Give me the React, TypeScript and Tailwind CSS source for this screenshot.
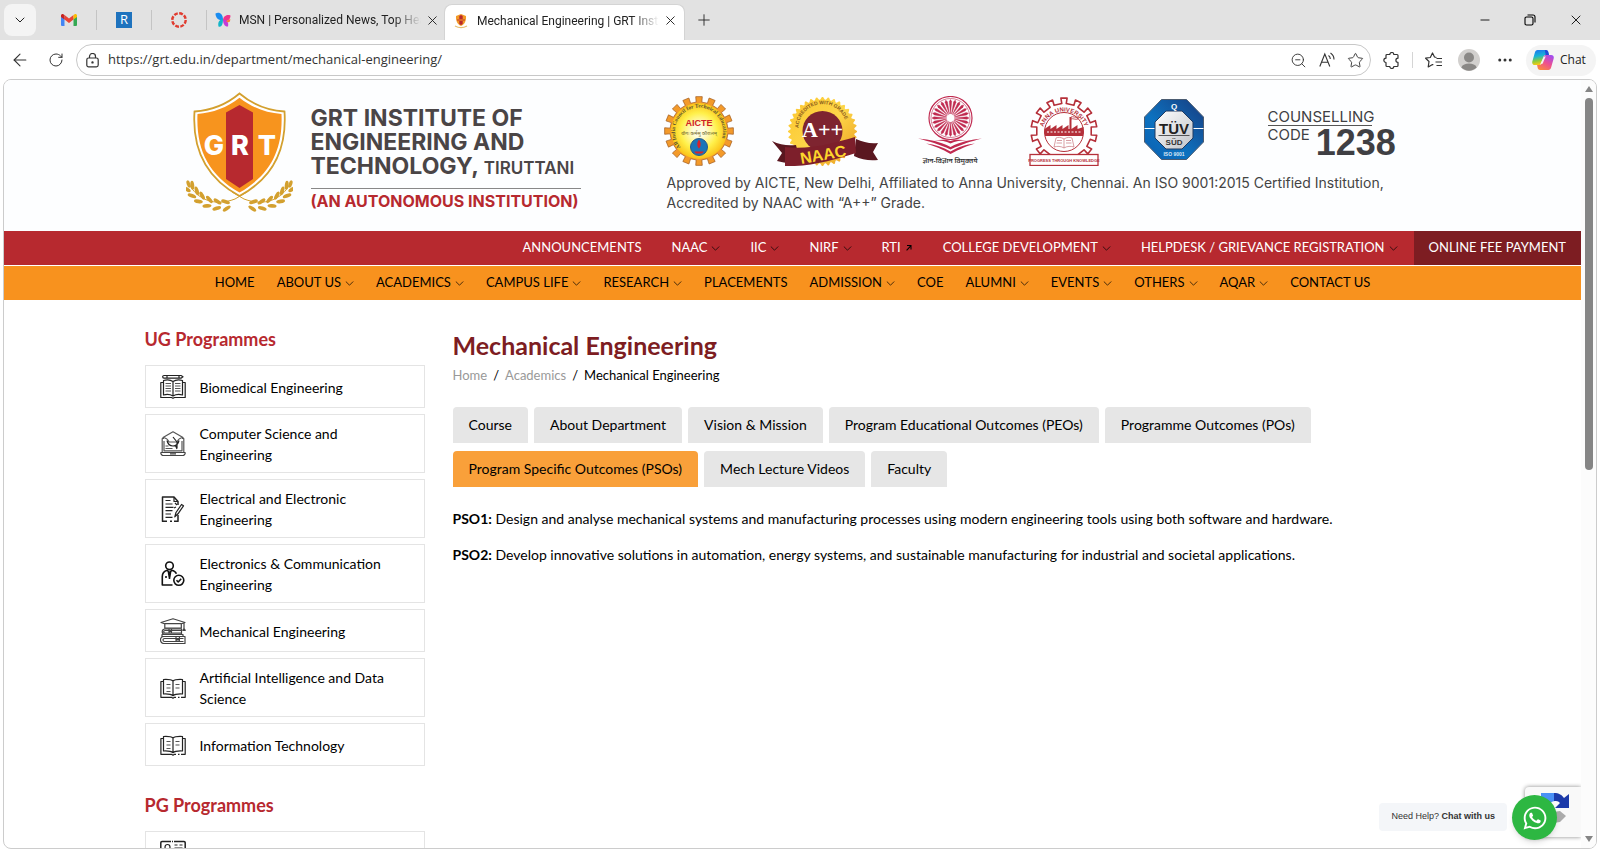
import { useState, type ReactNode } from 'react';
import {
	ArrowLeft,
	ChevronDown,
	Copy,
	Lock,
	Minus,
	MoreHorizontal,
	Plus,
	RotateCw,
	Star,
	X,
	ZoomOut,
} from 'lucide-react';
import { FaWhatsapp } from 'react-icons/fa';

interface NavItem {
	label: string;
	mark?: 'menu' | 'external';
}

interface Programme {
	name: string;
	icon: ReactNode;
}

const topNav: NavItem[] = [
	{ label: 'ANNOUNCEMENTS' },
	{ label: 'NAAC', mark: 'menu' },
	{ label: 'IIC', mark: 'menu' },
	{ label: 'NIRF', mark: 'menu' },
	{ label: 'RTI', mark: 'external' },
	{ label: 'COLLEGE DEVELOPMENT', mark: 'menu' },
	{ label: 'HELPDESK / GRIEVANCE REGISTRATION', mark: 'menu' },
];

const mainNav: NavItem[] = [
	{ label: 'HOME' },
	{ label: 'ABOUT US', mark: 'menu' },
	{ label: 'ACADEMICS', mark: 'menu' },
	{ label: 'CAMPUS LIFE', mark: 'menu' },
	{ label: 'RESEARCH', mark: 'menu' },
	{ label: 'PLACEMENTS' },
	{ label: 'ADMISSION', mark: 'menu' },
	{ label: 'COE' },
	{ label: 'ALUMNI', mark: 'menu' },
	{ label: 'EVENTS', mark: 'menu' },
	{ label: 'OTHERS', mark: 'menu' },
	{ label: 'AQAR', mark: 'menu' },
	{ label: 'CONTACT US' },
];

const tabs = [
	'Course',
	'About Department',
	'Vision & Mission',
	'Program Educational Outcomes (PEOs)',
	'Programme Outcomes (POs)',
	'Program Specific Outcomes (PSOs)',
	'Mech Lecture Videos',
	'Faculty',
];

const outcomes = [
	{
		code: 'PSO1:',
		text: 'Design and analyse mechanical systems and manufacturing processes using modern engineering tools using both software and hardware.',
	},
	{
		code: 'PSO2:',
		text: 'Develop innovative solutions in automation, energy systems, and sustainable manufacturing for industrial and societal applications.',
	},
];

// Outline of a gear or star: alternates between two radii
const gearPath = (
	cx: number,
	cy: number,
	outer: number,
	inner: number,
	teeth: number,
	top: number,
	base: number
) => {
	const points: string[] = [];
	for (let i = 0; i < teeth; i++) {
		const mid = (i / teeth) * Math.PI * 2 - Math.PI / 2;
		const step = Math.PI / teeth;
		[
			[inner, -base],
			[outer, -top],
			[outer, top],
			[inner, base],
		].forEach(([r, f]) => {
			const a = mid + f * step;
			points.push(
				`${(cx + r * Math.cos(a)).toFixed(2)} ${(cy + r * Math.sin(a)).toFixed(2)}`
			);
		});
	}
	return `M${points.join('L')}Z`;
};

const LineIcon = ({ children }: { children: ReactNode }) => (
	<svg
		viewBox="0 0 26 26"
		className="w-[26px] h-[26px] shrink-0"
		fill="none"
		stroke="#222"
		strokeWidth="1.2"
		strokeLinejoin="round"
		aria-hidden="true"
	>
		{children}
	</svg>
);

const BookPencilIcon = () => (
	<LineIcon>
		<path d="M4 1.5h17l2 1.3-2 1.4H4a1.3 1.3 0 0 1 0-2.7zM7 1.5v2.7M19 1.5v2.7" />
		<path d="M13 7.5C10.500 5.800 6 5.800 3.500 6.500V21C6 20.300 10.500 20.500 13 22c2.500-1.500 7-1.700 9.500-1V6.500C20 5.800 15.500 5.800 13 7.500zM13 7.500V22" />
		<path d="M3.500 8.500H.8v15H11.500l1.500.8 1.500-.8h10.700v-15h-2.700" />
		<path
			d="M5.500 9.500h5.500M5.500 12h5.500M5.500 14.500h5.500M5.500 17h5.500M15 9.500h5.500M15 12h5.500M15 14.500h5.500M15 17h5.500"
			stroke="#555"
		/>
	</LineIcon>
);

const LaptopCapIcon = () => (
	<LineIcon>
		<path d="M4 7.500H2.200V21.500H23.800V7.500H22M4 10v9.800h18V10" stroke="#555" />
		<path d="M.9 21.500h24.200v1.300l-1.500 1.700H2.400L.9 22.800zM10 22.800h6" stroke="#444" />
		<path d="M13 .8 3 6.500c3 .4 5 2 6 4.500h8c1-2.500 3-4.100 6-4.500z" stroke="#555" />
		<path d="M7 9.500c1 4.500 3.500 5.500 6 5.500s5-1 6-5.500M13 6l4 5v6M15.500 14.500 17 18" />
		<path d="M5.500 15h3M5.500 17.500h7" stroke="#555" />
	</LineIcon>
);

const PaperPenIcon = () => (
	<LineIcon>
		<path d="M18 9V5.500L14 1H2.500v24.300H7M10 25.300h2M14 25.300h4V19" strokeWidth="1.500" />
		<path d="M14 1v4.500h4" />
		<path d="M5.500 4.500h5M5.500 8h7M5.500 11.300h8M5.500 14.600h7M5.500 18h5.500M5.500 21.300h7" />
		<path d="m14.800 20.800 1.200-4.300 5.500-8 2 1.300-5.500 8zM15 7l2 2M14 12l2-1" />
	</LineIcon>
);

const PersonCheckIcon = () => (
	<LineIcon>
		<g strokeWidth="1.600" stroke="#111">
			<circle cx="9.500" cy="4.800" r="3.800" />
			<path d="M12.500 24H2.300V15.500c0-3.500 2-5.500 5-6.300L9.500 12l2.200-2.800c2.300.5 4 1.800 4.700 3.500M9.500 12v6M6 15v2" />
			<path d="m8.500 11.500 1 4.500 1-4.500z" fill="#111" />
			<circle cx="18.800" cy="19.300" r="5" />
			<path d="m16.500 19.300 1.700 1.700 3-3.200" />
		</g>
	</LineIcon>
);

const BooksCapIcon = () => (
	<LineIcon>
		<g stroke="#444">
			<path d="M13 .8 1 4.500l3.500 1.200h17L25 4.500zM4.800 5.700v4.500h16.500V5.700M24 5v5.500l1.300 1.800h-2.500L24 10.500" />
			<path d="M6 11h15.500v5.500H4.500a2.800 2.800 0 0 1 0-5.500zM21.500 12.500H5a1 1 0 0 0 0 2.700h16.500M9 11v3l1.300-1 1.200 1v-3" />
			<path d="M4 18.500h21v7H4a3.500 3.500 0 0 1 0-7zM23.500 20.500H4.500a1.400 1.400 0 0 0 0 3h19M16 18.500v4l1.700-1.300 1.700 1.300v-4" />
			<path d="M2 16.500h21v2H2z" />
		</g>
	</LineIcon>
);

const OpenBookIcon = () => (
	<LineIcon>
		<g stroke="#222">
			<path d="M13 6c-2-1.700-6-1.700-9.500-1.500v14.500c3.500-.2 7.500 0 9.500 1.700 2-1.700 6-1.900 9.500-1.700V4.500C19 4.300 15 4.300 13 6zM13 6v15" />
			<path d="M3.500 6.500H.9v15.800h10.600l1.500.9 1.500-.9H16M18 22.300h1.500M21 22.300h4.200V6.500h-2.700" />
			<path d="M6.500 9.500h4M6.500 13h4M6.500 16.500h4M15.500 9.500h4M15.500 13h4" stroke="#555" />
		</g>
	</LineIcon>
);

const CardIcon = () => (
	<LineIcon>
		<path d="M11 1.500H2A1.200 1.200 0 0 0 .8 2.700V24h24.400V2.700A1.200 1.200 0 0 0 24 1.500H14M12 1.500h1" strokeWidth="1.500" />
		<circle cx="7.500" cy="7" r="2.500" />
		<path d="M4 15c0-3 1.500-4.500 3.500-4.500S11 12 11 15zM14.500 5h3M19.500 5h3M14.500 8h8M14.500 11h8" />
	</LineIcon>
);

const ugProgrammes: Programme[] = [
	{ name: 'Biomedical Engineering', icon: <BookPencilIcon /> },
	{ name: 'Computer Science and Engineering', icon: <LaptopCapIcon /> },
	{ name: 'Electrical and Electronic Engineering', icon: <PaperPenIcon /> },
	{ name: 'Electronics & Communication Engineering', icon: <PersonCheckIcon /> },
	{ name: 'Mechanical Engineering', icon: <BooksCapIcon /> },
	{ name: 'Artificial Intelligence and Data Science', icon: <OpenBookIcon /> },
	{ name: 'Information Technology', icon: <OpenBookIcon /> },
];

const pgProgrammes: Programme[] = [{ name: '', icon: <CardIcon /> }];

const leaves = [
	[4, 96, 55],
	[9, 102, 45],
	[15, 107, 33],
	[23, 111, 20],
	[32, 113, 6],
	[41, 113, -10],
];

const Laurel = () => (
	<g fill="#d3a02f">
		{leaves.map(([x, y, angle]) => (
			<g key={x} transform={`rotate(${angle} ${x} ${y})`}>
				<ellipse cx={x - 1} cy={y - 3} rx="4.500" ry="1.900" transform={`rotate(28 ${x} ${y - 3})`} />
				<ellipse cx={x - 1} cy={y + 3} rx="4.500" ry="1.900" transform={`rotate(-24 ${x} ${y + 3})`} />
			</g>
		))}
		<ellipse cx="2.500" cy="92" rx="1.800" ry="3.800" transform="rotate(-18 2.500 92)" />
		<path d="M3 92c8 15 25 23 46 15l12-7" fill="none" stroke="#d3a02f" strokeWidth="1" />
	</g>
);

const ShieldLogo = () => (
	<svg viewBox="0 0 107 120" className="w-[107px] h-[120px] shrink-0" role="img" aria-label="GRT">
		<path
			d="M53.500 1.500C41 12 25 18.500 8.500 19.500 6 58 20 86 53.500 104 87 86 101 58 98.500 19.500 82 18.500 66 12 53.500 1.500z"
			fill="#fff"
			stroke="#d3a02f"
			strokeWidth="1.800"
		/>
		<path
			d="M53.500 5.800C41 15.500 27 21 11.500 22 10 57 22 82.500 53.500 100.500 85 82.500 97 57 95.500 22 80 21 66 15.500 53.500 5.800z"
			fill="#f7941e"
		/>
		<path d="M53.500 13 67 20.500V87L53.500 96 40 87V20.500z" fill="#b7292f" />
		<g
			fill="#fff"
			fontFamily="Inter, sans-serif"
			fontWeight="800"
			fontSize="27"
			textAnchor="middle"
		>
			<text x="28" y="63">G</text>
			<text x="54" y="63">R</text>
			<text x="81" y="63">T</text>
		</g>
		<Laurel />
		<g transform="translate(107 0) scale(-1 1)">
			<Laurel />
		</g>
	</svg>
);

const AicteBadge = () => (
	<svg viewBox="0 0 70 70" className="w-[70px] h-[70px] shrink-0" role="img" aria-label="AICTE">
		<defs>
			<radialGradient id="aicte-face">
				<stop offset="0.200" stopColor="#fffde0" />
				<stop offset="0.650" stopColor="#fff04a" />
				<stop offset="1" stopColor="#fbc318" />
			</radialGradient>
			<path id="aicte-ring" d="M18 52.500a24 24 0 1 1 34 0" />
		</defs>
		<path d={gearPath(35, 35, 34.5, 29, 16, 0.48, 0.5)} fill="#f39a2a" stroke="#a8652a" strokeWidth="0.800" />
		<circle cx="35" cy="35" r="28" fill="url(#aicte-face)" />
		<text fontFamily="Liberation Serif, serif" fontWeight="700" fontSize="5.500" fill="#5b5330">
			<textPath href="#aicte-ring" startOffset="2">
				All India Council for Technical Education
			</textPath>
		</text>
		<text x="35" y="30" textAnchor="middle" fontFamily="Liberation Sans, sans-serif" fontWeight="700" fontSize="9" fill="#cf2027">
			AICTE
		</text>
		<text x="35" y="39" textAnchor="middle" fontFamily="Noto Sans, sans-serif" fontSize="5" fill="#6a6225">
			योगः कर्मसु कौशलम्
		</text>
		<circle cx="35" cy="51" r="8.500" fill="#1b75b8" stroke="#28588c" />
		<path d="M35 43.500c2.500 3.500 2 7 0 9-2-2-2.500-5.500 0-9zM30 55.500h10l-2 2h-6z" fill="#d8232a" />
	</svg>
);

const NaacBadge = () => (
	<svg viewBox="0 0 110 70" className="w-[110px] h-[70px] shrink-0" role="img" aria-label="NAAC A++">
		<defs>
			<linearGradient id="naac-gold" x1="0" y1="0" x2="1" y2="1">
				<stop offset="0" stopColor="#fbc52d" />
				<stop offset="0.500" stopColor="#fdd649" />
				<stop offset="1" stopColor="#e9981c" />
			</linearGradient>
			<path id="naac-ring" d="M29 37a24 24 0 1 1 47 0" />
		</defs>
		<path d={gearPath(52.5, 35.5, 34.5, 32, 36, 0.2, 0.8)} fill="url(#naac-gold)" />
		<text fontFamily="Liberation Sans, sans-serif" fontWeight="700" fontSize="5" fill="#8a5a1c">
			<textPath href="#naac-ring" startOffset="5">
				ACCREDITED WITH GRADE
			</textPath>
		</text>
		<circle cx="52.500" cy="35" r="20" fill="#7e2430" />
		<path d="M2 45c8 4 16 5 24 4l4 17c-8 2-16 1-23-1l5-8z" fill="#5a1720" />
		<path d="M108 47c-8 1-15-1-22-4l-2 17c8 4 16 5 24 4l-5-8z" fill="#5a1720" />
		<path d="M15 51c25 3 49-4 70-10l1 16c-22 7-46 14-71 13z" fill="#7d1f2b" />
		<text x="52.500" y="41" textAnchor="middle" fontFamily="Liberation Serif, serif" fontWeight="700" fontSize="22" fill="#fff">
			A++
		</text>
		<text
			x="54"
			y="64"
			textAnchor="middle"
			transform="rotate(-10 54 64)"
			fontFamily="Liberation Sans, sans-serif"
			fontWeight="700"
			fontSize="16"
			fill="#fdd62c"
		>
			NAAC
		</text>
	</svg>
);

const UgcBadge = () => (
	<svg viewBox="0 0 68 70" className="w-[68px] h-[70px] shrink-0" role="img" aria-label="UGC">
		<g stroke="#c02a50" fill="none">
			<circle cx="34.500" cy="22" r="21.500" strokeWidth="1.200" />
			<circle cx="34.500" cy="22" r="19.500" strokeWidth="0.600" />
			{Array.from({ length: 24 }, (_, i) => (
				<path
					key={i}
					d="M34.500 18 33.300 5.500 34.500 3.500 35.700 5.500z"
					fill="#c02a50"
					strokeWidth="0.400"
					transform={`rotate(${i * 15} 34.500 22)`}
				/>
			))}
		</g>
		<g fill="#c02a50">
			<path d="M2 42.500c12 1 22 3 32.500 8.500 10-5.500 21-7.500 31.500-8.500-11 3-20 5.500-31.500 11C23 48 13 45.500 2 42.500z" />
			<path d="M10 47.500c9 1 17 3.500 24.500 8 7.500-4.500 15-7 24.500-8-8 2.500-15 5.500-24.500 10.500C26 53 18 50 10 47.500z" />
			<path d="M18 44c7 .5 12 1 16.500 3.500C39 45 45 44.500 51 44c-6 0-12-1-16.500 1C30 43 24 44 18 44z" />
		</g>
		<text x="34" y="67" textAnchor="middle" fontFamily="Noto Sans, sans-serif" fontWeight="600" fontSize="7" fill="#333">
			ज्ञान-विज्ञान विमुक्तये
		</text>
	</svg>
);

const AnnaBadge = () => (
	<svg viewBox="0 0 72 70" className="w-[72px] h-[70px] shrink-0" role="img" aria-label="Anna University">
		<defs>
			<path id="anna-ring" d="M14.500 37a21.500 21.500 0 1 1 43 0" />
		</defs>
		<path
			d={gearPath(36, 35, 33, 27.5, 14, 0.42, 0.36)}
			fill="#fff"
			stroke="#b5303a"
			strokeWidth="1.600"
			strokeLinejoin="round"
		/>
		<text fontFamily="Liberation Sans, sans-serif" fontWeight="700" fontSize="6" fill="#b5303a">
			<textPath href="#anna-ring" startOffset="6">
				ANNA UNIVERSITY
			</textPath>
		</text>
		<circle cx="36" cy="36" r="19.500" fill="#fff" stroke="#b5303a" strokeWidth="1" />
		<path d="M16.500 38v-5l6-4v4l6-4v4l6-4v4l6-4v4h1V21h2v12l6-4v4l6-2v7z" fill="#b5303a" />
		<path d="M43 21c2-1 4 1 7 0v2c-3 1-5-1-7 0" fill="none" stroke="#b5303a" strokeWidth="0.800" />
		<path d="M19 36h34" stroke="#fff" strokeWidth="1.200" strokeDasharray="2 1.500" />
		<path d="M17 39h38" stroke="#b5303a" strokeWidth="2" />
		<path
			d="M36 43c-3-2-6-2-8-1l-2 9c3-1 7-1 10 1 3-2 7-2 10-1l-2-9c-2-1-5-1-8 1zv9M29 44.500h5M28.500 47h5.500M38 44.500h5M38 47h5.500"
			fill="none"
			stroke="#c9767d"
			strokeWidth="0.700"
		/>
		<rect x="2" y="58.500" width="68" height="11" fill="#fff" stroke="#b5303a" strokeWidth="1.300" />
		<text x="36" y="65.500" textAnchor="middle" fontFamily="Liberation Sans, sans-serif" fontWeight="700" fontSize="4" fill="#b5303a">
			PROGRESS THROUGH KNOWLEDGE
		</text>
	</svg>
);

const TuvBadge = () => (
	<svg viewBox="0 0 60 70" className="w-[60px] h-[70px] shrink-0" role="img" aria-label="TÜV SÜD ISO 9001">
		<defs>
			<linearGradient id="tuv-blue" x1="0" y1="1" x2="1" y2="0">
				<stop offset="0" stopColor="#0a5fb0" />
				<stop offset="0.400" stopColor="#0d72c0" />
				<stop offset="1" stopColor="#173d80" />
			</linearGradient>
			<linearGradient id="tuv-silver" x1="0" y1="0" x2="1" y2="1">
				<stop offset="0" stopColor="#fff" />
				<stop offset="1" stopColor="#bfc3c8" />
			</linearGradient>
		</defs>
		<path d="M17.500 3.500h25L59.500 21v25L42.500 63.500h-25L.5 46V21z" fill="url(#tuv-blue)" stroke="#4b5c72" />
		<path d="M.5 32.500h59" stroke="#fff" strokeWidth="1" />
		<path d="M22 15h16l11 11v16L38 53H22L11 42V26z" fill="url(#tuv-silver)" stroke="#203a60" />
		<path d="M14.500 39.500h31" stroke="#333" strokeWidth="0.800" />
		<g fontFamily="Liberation Sans, sans-serif" fontWeight="700" textAnchor="middle">
			<text x="30" y="37.500" fontSize="15" fill="#222">TÜV</text>
			<text x="30" y="49" fontSize="8" fill="#333">SÜD</text>
			<text x="30" y="13" fontSize="8" fill="#fff">Q</text>
			<text x="30" y="60" fontSize="5" fill="#dbe8f5">ISO 9001</text>
		</g>
	</svg>
);

const MsnIcon = () => (
	<svg viewBox="0 0 16 16" className="w-4 h-4 shrink-0" aria-hidden="true">
		<path d="M.5 1.500C4-.500 8 1.500 8 8 4.500 9 .5 6.500.5 1.500z" fill="#1a8cf0" />
		<path d="M8 7C4.500 7.500 2.500 10 3.500 14.500c3 1 4.500-2 4.500-7.500z" fill="#12b5c9" />
		<path d="M15.500 3.500C11.500 2 8 4.500 8 8.500c4 1.500 7.500-.5 7.500-5z" fill="#f0348d" />
		<path d="M8 7.500c3.500 0 6 2.500 5 7-3 .5-5-2.500-5-7z" fill="#c43bd8" />
		<path d="M11 9.300 15.300 7c0 3-1.300 4.500-4.300 2.300z" fill="#ff7a2e" />
	</svg>
);

const GmailIcon = () => (
	<svg viewBox="0 0 16 12" className="w-4 h-3" aria-hidden="true">
		<path d="M0 1.800V11a1 1 0 0 0 1 1h2.500V4z" fill="#4285f4" />
		<path d="M16 1.800V11a1 1 0 0 1-1 1h-2.500V4z" fill="#34a853" />
		<path d="M3.500 5.500V1L8 4.500 12.500 1v4.500L8 9z" fill="#ea4335" />
		<path d="M0 1.600C0 .2 1.600-.4 2.600.4l.9.7v4.500L0 3z" fill="#c5221f" />
		<path d="M16 1.600C16 .2 14.400-.4 13.400.4l-.9.7v4.500L16 3z" fill="#fbbc04" />
	</svg>
);

const CopilotIcon = () => (
	<svg viewBox="0 0 24 22" className="w-[22px] h-5" aria-hidden="true">
		<defs>
			<linearGradient id="pilot-a" x1="0" y1="0" x2="0.200" y2="1">
				<stop offset="0" stopColor="#1e6ff0" />
				<stop offset="0.450" stopColor="#16b4d6" />
				<stop offset="0.750" stopColor="#8ccb3c" />
				<stop offset="1" stopColor="#f6c915" />
			</linearGradient>
			<linearGradient id="pilot-b" x1="0.800" y1="0" x2="0.200" y2="1">
				<stop offset="0" stopColor="#a14df0" />
				<stop offset="0.500" stopColor="#ee4f90" />
				<stop offset="1" stopColor="#fb8a3c" />
			</linearGradient>
		</defs>
		<path d="M6 0h9c2 0 2.600 1 3 3l.6 2.500H15c-1.500 0-2 .8-2.400 2L10 15c-.5 1-1 1.500-2.500 1.500H3C.5 16.500-.4 14.500.4 12L3 3C3.600 1 4.500 0 6 0z" fill="url(#pilot-a)" />
		<path d="M14 0h1c2 0 2.600 1 3 3l.6 2.500H15z" fill="#2147d8" />
		<path d="M18 22H9c-2 0-2.600-1-3-3l-.5-2.500h2.700c1.300 0 1.800-.5 2.300-2L13 7c.5-1.200 1-1.500 2.500-1.500H21c2.500 0 3.400 2 2.600 4.500L21 19c-.6 2-1.500 3-3 3z" fill="url(#pilot-b)" />
		<path d="M12.800 7.500 15 7l-3.500 8-2.500.3z" fill="#f4f4f4" />
	</svg>
);

const MiniShield = () => (
	<svg viewBox="0 0 16 16" className="w-4 h-4 shrink-0" aria-hidden="true">
		<path d="M8 1 13 3c.3 4.500-1 8-5 10C4 11 2.700 7.500 3 3z" fill="#f39a27" />
		<path d="M6.300 3 8 2l1.700 1v8L8 12l-1.700-1z" fill="#b7292f" />
		<path d="M4 6h8v2H4z" fill="#d9662a" />
		<path d="M2 13c3.500 2 8.500 2 12 0" fill="none" stroke="#e5bf71" strokeWidth="1.200" />
	</svg>
);

const BrowserTabs = () => (
	<div className="flex h-10 shrink-0 items-center bg-[#e2e2e2] pl-1 text-[#222]">
		<button aria-label="Tab actions" className="flex w-8 h-8 items-center justify-center rounded-lg bg-[#f4f4f4]">
			<ChevronDown size={16} strokeWidth={1.5} />
		</button>
		<div className="ml-1.5 flex h-5 items-center divide-x divide-[#c4c4c4]">
			<a href="#mail" aria-label="Mail" className="flex h-5 w-[55px] items-center justify-center">
				<GmailIcon />
			</a>
			<a href="#r" aria-label="R" className="flex h-5 w-[55px] items-center justify-center">
				<span className="flex w-4 h-4 items-center justify-center bg-[#1e73be] text-[13px] text-white">R</span>
			</a>
			<a href="#canvas" aria-label="Canvas" className="flex h-5 w-[55px] items-center justify-center">
				<svg viewBox="0 0 16 16" className="w-4 h-4" aria-hidden="true">
					<circle cx="8" cy="8" r="6.700" fill="none" stroke="#e03c30" strokeWidth="2.400" strokeDasharray="3.800 1.460" />
				</svg>
			</a>
			<div className="flex h-5 w-[237px] items-center gap-2 pl-2">
				<MsnIcon />
				<span className="w-[182px] whitespace-nowrap font-['Roboto',sans-serif] text-xs mask-r-from-85%">
					MSN | Personalized News, Top Hea
				</span>
				<button aria-label="Close tab" className="-ml-1">
					<X size={15} strokeWidth={1.5} />
				</button>
			</div>
		</div>
		<div className="flex h-9 w-[241px] items-center gap-2 self-end rounded-t-lg border border-b-0 border-[#d4d4d4] bg-white pb-1 pl-2">
			<MiniShield />
			<span className="w-[182px] whitespace-nowrap font-['Roboto',sans-serif] text-xs mask-r-from-85%">
				Mechanical Engineering | GRT Insti
			</span>
			<button aria-label="Close tab" className="-ml-1">
				<X size={15} strokeWidth={1.5} />
			</button>
		</div>
		<button aria-label="New tab" className="ml-2.5">
			<Plus size={18} strokeWidth={1.2} />
		</button>
		<div className="ml-auto flex items-center gap-8 pr-4 text-black">
			<button aria-label="Minimize">
				<Minus size={14} strokeWidth={1.5} />
			</button>
			<button aria-label="Restore">
				<svg viewBox="0 0 12 12" className="w-3 h-3" fill="none" stroke="currentColor" strokeWidth="1.100" aria-hidden="true">
					<rect x="1" y="3" width="8" height="8" rx="1.500" />
					<path d="M3.500 1H9a2 2 0 0 1 2 2v5.500" />
				</svg>
			</button>
			<button aria-label="Close">
				<X size={16} strokeWidth={1.3} />
			</button>
		</div>
	</div>
);

const AddressBar = () => {
	const [url, setUrl] = useState('https://grt.edu.in/department/mechanical-engineering/');

	return (
		<div className="flex h-[39px] shrink-0 items-center bg-white pt-px pl-2.5 pr-1 text-[#333]">
			<button aria-label="Back">
				<ArrowLeft size={20} strokeWidth={1.3} />
			</button>
			<button aria-label="Refresh" className="ml-[18px]">
				<RotateCw size={16} strokeWidth={1.5} />
			</button>
			<div className="ml-3 flex h-8 flex-1 items-center rounded-full border border-[#c8c8c8] pl-2 pr-1.5">
				<svg viewBox="0 0 15 15" className="w-[15px] h-[15px] shrink-0" fill="none" stroke="currentColor" strokeWidth="1.200" aria-hidden="true">
					<rect x="1.800" y="5" width="11.400" height="8.800" rx="1.800" />
					<path d="M4.500 5V3.500a3 3 0 0 1 6 0V5" />
					<circle cx="7.500" cy="9.400" r="0.600" fill="currentColor" />
				</svg>
				<input
					aria-label="Address"
					className="ml-2 min-w-0 flex-1 text-[13px] text-[#333] outline-none"
					value={url}
					onChange={(e) => setUrl(e.target.value)}
				/>
				<div className="flex items-center gap-3">
					<button aria-label="Zoom">
						<ZoomOut size={17} strokeWidth={1.3} />
					</button>
					<button aria-label="Read aloud">
						<svg viewBox="0 0 16 16" className="w-4 h-4" fill="none" stroke="currentColor" strokeWidth="1.100" aria-hidden="true">
							<path d="m.8 14.500 5-12.500 5 12.500M2.500 10.200h6.600M9.500 3.500c1.200.8 1.800 2 1.800 3.500M11.500 1c2.200 1.500 3.500 3.700 3.500 6.500" />
						</svg>
					</button>
					<button aria-label="Add to favourites">
						<Star size={17} strokeWidth={1.3} />
					</button>
				</div>
			</div>
			<button aria-label="Extensions" className="ml-3">
				<svg viewBox="0 0 17 17" className="w-[17px] h-[17px]" fill="none" stroke="currentColor" strokeWidth="1.200" strokeLinejoin="round" aria-hidden="true">
					<path d="M4 2.500h2.800a2 2 0 0 1 4 0H14a1 1 0 0 1 1 1v2.700a2 2 0 0 0 0 4.200V13.500a1 1 0 0 1-1 1h-3.200a2 2 0 0 1-4 0H4a1 1 0 0 1-1-1v-3a2 2 0 0 1 0-4.300V3.500a1 1 0 0 1 1-1z" />
				</svg>
			</button>
			<span className="ml-3 h-4 w-px bg-[#d5d5d5]" />
			<button aria-label="Favourites" className="ml-3">
				<svg viewBox="0 0 17 17" className="w-[17px] h-[17px]" fill="none" stroke="currentColor" strokeWidth="1.200" strokeLinejoin="round" aria-hidden="true">
					<path d="M11.500 5.500 9.500 5 7.500 1 5.300 5.500.6 6.200 4 9.500 3.200 15l4.300-2.500.8.500M11.500 6.500H17M10.500 10H17M11.500 13.500H17" />
				</svg>
			</button>
			<button aria-label="Profile" className="ml-4">
				<svg viewBox="0 0 22 22" className="w-[22px] h-[22px]" aria-hidden="true">
					<circle cx="11" cy="11" r="11" fill="#d2d0ce" />
					<circle cx="11" cy="8.500" r="5" fill="#8a8886" />
					<path d="M3.300 18.500C4.500 15.500 7.500 14.500 11 14.500s6.500 1 7.700 4A11 11 0 0 1 3.300 18.500z" fill="#8a8886" />
				</svg>
			</button>
			<button aria-label="Settings" className="ml-4">
				<MoreHorizontal size={18} />
			</button>
			<button className="ml-3 flex h-[31px] w-[70px] items-center gap-1.5 rounded-full bg-[#f4f4f4] pl-1.5 text-xs text-[#222]">
				<CopilotIcon />
				Chat
			</button>
		</div>
	);
};

const Banner = () => (
	<header className="bg-[#fdfeff] pt-3 pb-[18px]">
		<div className="mx-auto flex max-w-[1296px] items-start pl-[41px] font-['Inter',sans-serif]">
			<ShieldLogo />
			<div className="ml-[18px] mt-3.5 w-[270px] shrink-0 font-bold text-[#4a4546]">
				<p className="text-[23px] leading-[24px] whitespace-nowrap">
					GRT INSTITUTE OF
					<br />
					ENGINEERING AND
					<br />
					TECHNOLOGY, <span className="text-[17px] font-semibold">TIRUTTANI</span>
				</p>
				<p className="mt-2 border-t border-[#888] pt-0.5 text-base leading-5 whitespace-nowrap text-[#b7292f]">
					(AN AUTONOMOUS INSTITUTION)
				</p>
			</div>
			<div className="ml-[83px] mt-1">
				<div className="flex items-start">
					<AicteBadge />
					<div className="ml-9 flex">
						<NaacBadge />
					</div>
					<div className="ml-9 flex">
						<UgcBadge />
					</div>
					<div className="ml-11 flex">
						<AnnaBadge />
					</div>
					<div className="ml-11 flex">
						<TuvBadge />
					</div>
					<div className="ml-16 pt-3 text-[15px] leading-[17px] text-[#3f3f43]">
						<p className="w-[104px] border-b border-[#555]">COUNSELLING</p>
						<p className="flex gap-1.5">
							CODE
							<strong className="font-['Liberation_Sans',sans-serif] text-[36px] leading-[34px]">
								1238
							</strong>
						</p>
					</div>
				</div>
				<p className="mt-[7px] pl-[3px] text-sm leading-5 text-[#444]">
					Approved by AICTE, New Delhi, Affiliated to Anna University, Chennai. An ISO 9001:2015 Certified Institution,
					<br />
					Accredited by NAAC with “A++” Grade.
				</p>
			</div>
		</div>
	</header>
);

const NavLink = ({ item }: { item: NavItem }) => (
	<a href="#nav" className="flex items-center gap-1 whitespace-nowrap">
		{item.label}
		{item.mark === 'menu' && (
			<svg viewBox="0 0 9 5" className="w-[9px] h-[5px] text-black/70" fill="none" stroke="currentColor" aria-hidden="true">
				<path d="m.8.500 3.700 3.700L8.200.500" />
			</svg>
		)}
		{item.mark === 'external' && (
			<svg viewBox="0 0 10 10" className="w-2 h-2 text-black" fill="none" stroke="currentColor" strokeWidth="1.300" aria-hidden="true">
				<path d="M2.500 2h5v5M7.500 2 2 8" />
			</svg>
		)}
	</a>
);

const ProgrammeList = ({ title, items }: { title: string; items: Programme[] }) => (
	<section>
		<h2 className="text-lg leading-6 font-bold text-[#b7292f]">{title}</h2>
		<ul className="mt-3.5 space-y-1.5">
			{items.map((item) => (
				<li key={item.name}>
					<a
						href="#programme"
						className="flex min-h-[43px] items-center gap-3.5 border border-[#e4e4e4] pt-2 pr-6 pb-[7px] pl-3.5 text-sm leading-[21px] text-black"
					>
						{item.icon}
						<span className="max-w-[200px]">{item.name}</span>
					</a>
				</li>
			))}
		</ul>
	</section>
);

const Department = () => {
	const [active, setActive] = useState<string>('Program Specific Outcomes (PSOs)');

	return (
		<main className="flex-1 pt-0.5 text-black">
			<h1 className="text-[25px] leading-8 font-bold text-[#7d1d22]">Mechanical Engineering</h1>
			<nav aria-label="Breadcrumb" className="mt-1 flex gap-1.5 text-[13px] leading-5">
				<a href="#home" className="text-[#999]">Home</a>
				<span>/</span>
				<a href="#academics" className="text-[#999]">Academics</a>
				<span>/</span>
				<span>Mechanical Engineering</span>
			</nav>
			<div role="tablist" className="mt-[22px] flex flex-wrap gap-x-1.5 gap-y-2">
				{tabs.map((tab) => (
					<button
						key={tab}
						role="tab"
						aria-selected={active === tab}
						onClick={() => setActive(tab)}
						className={`h-9 rounded-t px-4 text-sm ${
							active === tab ? 'bg-[#f9a03a]' : 'bg-[#e6e6e6]'
						}`}
					>
						{tab}
					</button>
				))}
			</div>
			<div role="tabpanel" className="mt-[22px] space-y-4 text-sm leading-5">
				{outcomes.map((outcome) => (
					<p key={outcome.code}>
						<strong>{outcome.code}</strong> {outcome.text}
					</p>
				))}
			</div>
		</main>
	);
};

const ChatWidget = () => (
	<div className="absolute right-0 bottom-[11px] flex h-[50px] items-center">
		<span className="mr-[18px] mt-2.5 flex h-7 items-center rounded bg-[#f4f6f9] px-3 font-['Liberation_Sans',sans-serif] text-[9px] text-[#333]">
			<span>
				Need Help? <strong>Chat with us</strong>
			</span>
		</span>
		<div className="h-[50px] w-14 rounded-l-sm bg-[#f9f9f9] pt-1 pl-4 shadow-[0_0_4px_#888]">
			<svg viewBox="0 0 30 36" className="w-[30px] h-9" aria-hidden="true">
				<path d="M0 2h14v8a6 6 0 0 0-6 6H0z" fill="#4a90f5" />
				<path d="M13 2c5 0 8 2 10 5l5-4v14H14l5-5c-2-2-3-2-6-2z" fill="#1c3aa9" />
				<path d="m19 20 6 5-6 6-14 2V22z" fill="#ababab" />
			</svg>
		</div>
		<button
			aria-label="Chat on WhatsApp"
			className="absolute right-6 bottom-[-3px] flex h-[45px] w-[45px] items-center justify-center rounded-full bg-[#2db742] text-white shadow-md"
		>
			<FaWhatsapp size={26} />
		</button>
	</div>
);

const Scrollbar = () => (
	<div className="flex w-[15px] shrink-0 flex-col items-center bg-[#fcfcfc] py-1.5">
		<svg viewBox="0 0 8 6" className="w-2 h-1.5" aria-hidden="true">
			<path d="M4 0 8 6H0z" fill="#858585" />
		</svg>
		<span className="mt-1.5 h-[372px] w-2 rounded-full bg-[#858585]" />
		<svg viewBox="0 0 8 6" className="mt-auto w-2 h-1.5" aria-hidden="true">
			<path d="M4 6 0 0h8z" fill="#858585" />
		</svg>
	</div>
);

const App = () => (
	<div className="flex h-screen flex-col overflow-hidden bg-white font-['Open_Sans',sans-serif]">
		<BrowserTabs />
		<AddressBar />
		<div className="mx-[3px] mb-[3px] flex min-h-0 flex-1 overflow-hidden rounded-lg border border-[#ccc]">
			<div className="relative min-w-0 flex-1 overflow-hidden font-['Lato',sans-serif]">
				<Banner />
				<nav aria-label="Quick links" className="flex h-[34px] items-center justify-end gap-[30px] bg-[#b7292f] text-[13px] text-white">
					{topNav.map((item) => (
						<NavLink key={item.label} item={item} />
					))}
					<a href="#fees" className="-ml-3.5 flex h-full items-center bg-[#7d1d22] px-[15px] whitespace-nowrap">
						ONLINE FEE PAYMENT
					</a>
				</nav>
				<nav aria-label="Main" className="mt-px flex h-[34px] items-center justify-center gap-[22px] bg-[#f8921e] text-[13px] text-black">
					{mainNav.map((item) => (
						<NavLink key={item.label} item={item} />
					))}
				</nav>
				<div className="mx-auto flex max-w-[1296px] items-start gap-7 pt-[27px]">
					<aside className="w-[280px] shrink-0 space-y-[27px]">
						<ProgrammeList title="UG Programmes" items={ugProgrammes} />
						<ProgrammeList title="PG Programmes" items={pgProgrammes} />
					</aside>
					<Department />
				</div>
				<ChatWidget />
			</div>
			<Scrollbar />
		</div>
	</div>
);

export default App;
